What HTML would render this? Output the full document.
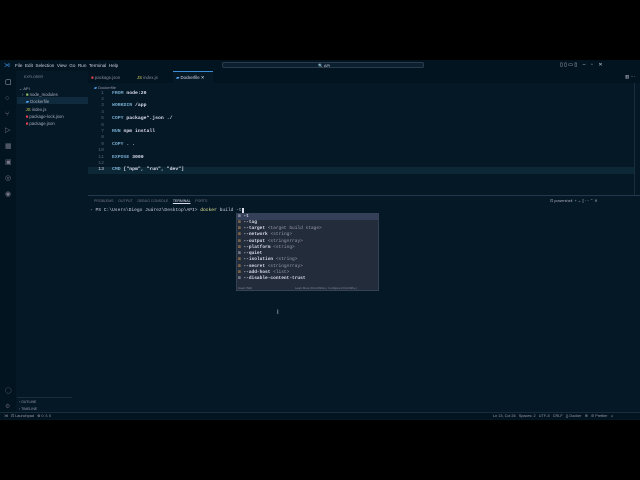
<!DOCTYPE html><html><head><style>
*{margin:0;padding:0;box-sizing:border-box}
body{width:640px;height:480px;background:#000;position:relative;overflow:hidden;font-family:"Liberation Sans",sans-serif;color:#aab}
.a{position:absolute;white-space:pre}
.m{font-family:"Liberation Mono",monospace}
</style></head><body>
<div class="a" style="left:0;top:60px;width:640px;height:360px;background:#041826"></div>
<div class="a" style="left:0;top:60px;width:640px;height:11px;background:#031421"></div>
<div class="a" style="left:4px;top:62px;font-size:6px;color:#3b8ed8">⋊</div>
<div class="a" style="left:15px;top:62.5px;font-size:4.6px;color:#ccd">File  Edit  Selection  View  Go  Run  Terminal  Help</div>
<div class="a" style="left:222px;top:62px;width:202px;height:6px;border:0.6px solid #2a3c4c;border-radius:2px;background:#0a2030"></div>
<div class="a" style="left:318px;top:62.5px;font-size:4px;color:#ccd">🔍 API</div>
<div class="a" style="left:560px;top:62px;font-size:5px;color:#ccd">▯ ▯ ▭ ▯    –    ▫    ✕</div>
<div class="a" style="left:0;top:71px;width:16px;height:342px;background:#031421"></div>
<div class="a" style="left:5px;top:75px;font-size:7px;color:#778;line-height:16px"><span style="color:#ccd">▢</span><br>○<br>⑂<br>▷<br>▦<br>▣<br>◎<br>◉</div>
<div class="a" style="left:5px;top:383px;font-size:6px;color:#556;line-height:16px">◯<br>⚙</div>
<div class="a" style="left:24px;top:75px;font-size:3.5px;color:#889">EXPLORER</div>
<div class="a" style="left:19px;top:86px;font-size:4px;color:#aab">⌄ API</div>
<div class="a" style="left:17px;top:97px;width:71px;height:7px;background:#0e2a3c"></div>
<div class="a" style="left:22px;top:91px;font-size:4.3px;color:#aab;line-height:7.3px">›  <span style="color:#9c6">■</span> node_modules<br>   <span style="color:#5af">▰</span> Dockerfile<br>   <span style="color:#cc5">JS</span> index.js<br>   <span style="color:#e45">■</span> package-lock.json<br>   <span style="color:#e45">■</span> package.json</div>
<div class="a" style="left:17px;top:397px;width:55px;height:0.5px;background:#1a2d3d"></div>
<div class="a" style="left:19px;top:399px;font-size:3.5px;color:#99a;line-height:7px">› OUTLINE<br>› TIMELINE</div>
<div class="a" style="left:88px;top:71px;width:552px;height:12px;background:#031421"></div>
<div class="a" style="left:91px;top:74.5px;font-size:4.3px;color:#889"><span style="color:#e45">■</span> package.json</div>
<div class="a" style="left:137px;top:74.5px;font-size:4.3px;color:#889"><span style="color:#cc5">JS</span> index.js</div>
<div class="a" style="left:173px;top:71px;width:40px;height:12px;background:#041826;border-top:0.6px solid #3b8ed8"></div>
<div class="a" style="left:176px;top:74.5px;font-size:4.3px;color:#dde"><span style="color:#5af">▰</span> Dockerfile ✕</div>
<div class="a" style="left:625px;top:74px;font-size:4.5px;color:#ccd">▥ ⋯</div>
<div class="a" style="left:94px;top:85px;font-size:4px;color:#99a"><span style="color:#5af">▰</span> Dockerfile</div>
<div class="a" style="left:88px;top:167px;width:546px;height:6.5px;background:#0c2735"></div>
<div class="a m" style="left:92px;top:90.5px;width:12px;text-align:right;font-size:4.8px;line-height:6.4px;color:#567">1
2
3
4
5
6
7
8
9
10
11
12
<span style="color:#dde">13</span></div>
<div class="a m" style="left:112px;top:90.5px;font-size:4.8px;line-height:6.4px;color:#dde;font-weight:bold"><span style="color:#7ac">FROM</span> node:20

<span style="color:#7ac">WORKDIR</span> /app

<span style="color:#7ac">COPY</span> package*.json ./

<span style="color:#7ac">RUN</span> npm install

<span style="color:#7ac">COPY</span> . .

<span style="color:#7ac">EXPOSE</span> 3000

<span style="color:#7ac">CMD</span> ["npm", "run", "dev"]</div>
<div class="a" style="left:634px;top:83px;width:0.6px;height:112px;background:#1a2d3d"></div>
<div class="a" style="left:88px;top:194.5px;width:552px;height:0.6px;background:#23384a"></div>
<div class="a" style="left:94px;top:198.5px;font-size:3.5px;color:#778">PROBLEMS     OUTPUT     DEBUG CONSOLE     <span style="color:#dde;text-decoration:underline">TERMINAL</span>     PORTS</div>
<div class="a" style="left:550px;top:198px;font-size:3.8px;color:#aab">⊡ powershell  + ⌄ ▯ ⋯ ⌃ ✕</div>
<div class="a m" style="left:90px;top:208px;font-size:4.6px;color:#ccd">◦ PS C:\Users\Diego Juárez\Desktop\API&gt; <span style="color:#ee9">docker</span> build -t<span style="background:#dde">&nbsp;</span></div>
<div class="a" style="left:236px;top:213px;width:143px;height:78px;background:#222c3a;border:0.5px solid #354255"></div>
<div class="a" style="left:237px;top:214px;width:141px;height:6px;background:#34405a"></div>
<div class="a m" style="left:238px;top:213.5px;font-size:4.5px;line-height:6.25px;color:#dde;font-weight:bold"><span style="color:#bbc">⊡</span> -t
<span style="color:#c95">⊡</span> --tag
<span style="color:#c95">⊡</span> --target <span style="color:#99a;font-weight:normal">&lt;target build stage&gt;</span>
<span style="color:#c95">⊡</span> --network <span style="color:#99a;font-weight:normal">&lt;string&gt;</span>
<span style="color:#c95">⊡</span> --output <span style="color:#99a;font-weight:normal">&lt;stringArray&gt;</span>
<span style="color:#c95">⊡</span> --platform <span style="color:#99a;font-weight:normal">&lt;string&gt;</span>
<span style="color:#bbc">⊡</span> --quiet
<span style="color:#c95">⊡</span> --isolation <span style="color:#99a;font-weight:normal">&lt;string&gt;</span>
<span style="color:#c95">⊡</span> --secret <span style="color:#99a;font-weight:normal">&lt;stringArray&gt;</span>
<span style="color:#c95">⊡</span> --add-host <span style="color:#99a;font-weight:normal">&lt;list&gt;</span>
<span style="color:#bbc">⊡</span> --disable-content-trust</div>
<div class="a" style="left:238px;top:286px;font-size:2.8px;color:#889">Insert (Tab)</div>
<div class="a" style="left:295px;top:286px;font-size:2.8px;color:#889">Learn More (Ctrl+Shift+L)  Configure (Ctrl+Shift+,)</div>
<div class="a" style="left:277px;top:310px;font-size:6px;color:#ccd">I</div>
<div class="a" style="left:0;top:412px;width:640px;height:7px;background:#031421;border-top:0.5px solid #1a2d3d"></div>
<div class="a" style="left:4px;top:413px;font-size:3.8px;color:#99a">⋊   ⊡ Launchpad   ⊗ 0 ⚠ 0</div>
<div class="a" style="left:493px;top:413px;font-size:3.8px;color:#99a">Ln 13, Col 26   Spaces: 2   UTF-8   CRLF   {} Docker   ⊕   ⊘ Prettier   ♫</div>
</body></html>
